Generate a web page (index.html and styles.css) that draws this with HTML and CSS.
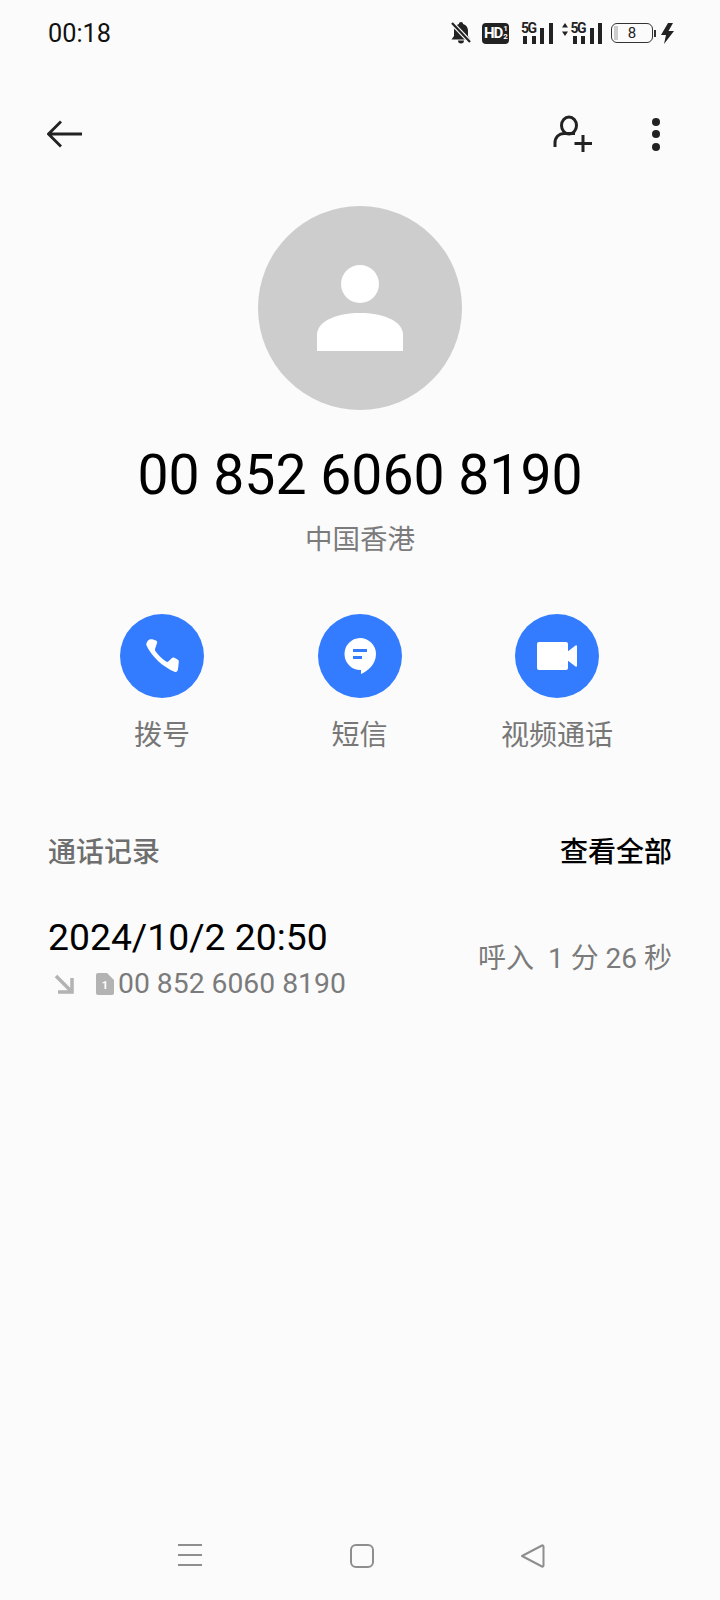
FILE: index.html
```html
<!DOCTYPE html>
<html>
<head>
	<meta charset="UTF-8">
	<title>通话详情</title>
	<link rel="stylesheet" href="styles.css">
</head>
<body>

	<div class="phone">

		<div class="status_bar">
			<span class="clock">00:18</span>
			<div class="status_icons">
				<svg class="ic_bell" width="22" height="24" viewBox="0 0 22 24">
					<path d="M11 1c1.200 0 2 .8 2.100 1.900 3.200.9 4.900 3.500 4.900 6.600v5.500l2.500 3.500H1.500L4 15V9.500c0-3.100 1.700-5.700 4.900-6.600C9 1.800 9.800 1 11 1z" fill="#222"/>
					<path d="M8 19.500h6a3 3 0 0 1-6 0z" fill="#222"/>
					<path d="M1 1l20 21" stroke="#fbfbfb" stroke-width="4.500"/>
					<path d="M2 2l18 19" stroke="#222" stroke-width="2.200"/>
				</svg>
				<div class="hd_badge">
					<span class="hd_text">HD</span>
					<span class="hd_num">1<br>2</span>
				</div>
				<div class="signal">
					<span class="net">5G</span>
					<span class="bars"><i class="b1"></i><i class="b2"></i><i class="b3"></i><i class="b4"></i></span>
				</div>
				<div class="signal">
					<svg class="ic_updown" width="6" height="13" viewBox="0 0 6 13">
						<path d="M3 0l3 4.500H0zM3 13L0 8.500h6z" fill="#222"/>
					</svg>
					<span class="net">5G</span>
					<span class="bars"><i class="b1"></i><i class="b2"></i><i class="b3"></i><i class="b4"></i></span>
				</div>
				<div class="battery">
					<div class="batt_body"><i class="batt_level"></i><span>8</span></div>
					<i class="batt_tip"></i>
				</div>
				<svg class="ic_bolt" width="13" height="21" viewBox="0 0 13 21">
					<path d="M7 0L0 12h5l-2 9 10-13H7.500L12 0z" fill="#222"/>
				</svg>
			</div>
		</div>

		<div class="top_bar">
			<svg width="36" height="28" viewBox="0 0 36 28">
				<path d="M35 14H2M14 1.500L1.500 14 14 26.500" fill="none" stroke="#222" stroke-width="2.800"/>
			</svg>
			<div class="top_right">
				<svg width="40" height="38" viewBox="0 0 40 38">
					<ellipse cx="16" cy="10.500" rx="7.500" ry="8.500" fill="none" stroke="#222" stroke-width="3"/>
					<path d="M2 32v-4c0-6 4-9.500 9-9.500h11" fill="none" stroke="#222" stroke-width="3"/>
					<path d="M30 20v17M21.500 28.500h17.500" fill="none" stroke="#222" stroke-width="3"/>
				</svg>
				<div class="dots"><i></i><i></i><i></i></div>
			</div>
		</div>

		<div class="contact">
			<div class="avatar">
				<svg width="86" height="86" viewBox="0 0 86 86">
					<circle cx="43" cy="19" r="19" fill="#fff"/>
					<path d="M0 86V70c0-15 22-22 43-22s43 7 43 22v16z" fill="#fff"/>
				</svg>
			</div>
			<div class="number">00 852 6060 8190</div>
			<div class="region">中国香港</div>
		</div>

		<div class="actions">
			<div class="action">
				<div class="circle">
					<svg width="34" height="34" viewBox="0 0 34 34">
						<path d="M4.500.5C5.500 0 7 0 8 .5l3 1c1 .5 1.500 1.500 1 2.500l-2 6c-.2.800 0 1.500.5 2.300 2.500 3.700 6.500 7.700 10.500 10.200 1 .5 1.700.5 2.300 0l3.700-3.500c.7-.7 1.700-.7 2.500-.3l3 1.800c1.200.7 1.500 1.500 1.300 2.500L33 30c-.2 2-1.500 3.300-3 3C18 28 7 18 1.500 6.500.8 4.500 2.500 1.500 4.500.5z" fill="#fff"/>
					</svg>
				</div>
				<span class="action_label">拨号</span>
			</div>
			<div class="action">
				<div class="circle">
					<svg width="32" height="36" viewBox="0 0 32 36">
						<path d="M16 0a16 16 0 0 1 16 16c0 10-8 17-15 20v-4A16 16 0 0 1 16 0z" fill="#fff"/>
						<path d="M9 11h14v3H9zM9 18h9v3H9z" fill="#347cff"/>
					</svg>
				</div>
				<span class="action_label">短信</span>
			</div>
			<div class="action">
				<div class="circle">
					<svg width="40" height="28" viewBox="0 0 40 28">
						<path d="M2 0h27a2 2 0 0 1 2 2v24a2 2 0 0 1-2 2H2a2 2 0 0 1-2-2V2a2 2 0 0 1 2-2z" fill="#fff"/>
						<path d="M30 10l8.500-6.500c.7-.5 1.500-.2 1.500.7v19.600c0 .9-.8 1.200-1.500.7L30 18z" fill="#fff"/>
					</svg>
				</div>
				<span class="action_label">视频通话</span>
			</div>
		</div>

		<div class="section_head">
			<span class="section_title">通话记录</span>
			<span class="section_more">查看全部</span>
		</div>

		<div class="record">
			<div class="record_left">
				<div class="record_date">2024/10/2 20:50</div>
				<div class="record_sub">
					<svg class="ic_in" width="20" height="20" viewBox="0 0 20 20">
						<path d="M2 2l14 14M18 4v14H4" fill="none" stroke="#b3b3b3" stroke-width="3.500"/>
					</svg>
					<svg class="ic_sim" width="18" height="22" viewBox="0 0 18 22">
						<path d="M2 0h9l7 7v13a2 2 0 0 1-2 2H2a2 2 0 0 1-2-2V2a2 2 0 0 1 2-2z" fill="#b3b3b3"/>
						<text x="9" y="16" class="sim_num">1</text>
					</svg>
					<span class="record_num">00 852 6060 8190</span>
				</div>
			</div>
			<div class="record_right">呼入&nbsp; 1 分 26 秒</div>
		</div>

		<div class="nav_bar">
			<svg width="26" height="24" viewBox="0 0 26 24">
				<path d="M1 2h24M1 12h24M1 22h24" stroke="#8e8e8e" stroke-width="2"/>
			</svg>
			<svg width="26" height="26" viewBox="0 0 26 26">
				<rect x="2" y="2" width="22" height="22" rx="5" fill="none" stroke="#8e8e8e" stroke-width="2"/>
			</svg>
			<svg width="26" height="26" viewBox="0 0 26 26">
				<path d="M2 13L22 2.500c.8-.4 1.500 0 1.500 1v19c0 1-.7 1.400-1.500 1z" fill="none" stroke="#8e8e8e" stroke-width="2" stroke-linejoin="round"/>
			</svg>
		</div>

	</div>

</body>
</html>
```

FILE: styles.css
```css
*{
	box-sizing: border-box;
}

body{
	margin: 0;
	background: #fbfbfb;
	font-family: Roboto, "Noto Sans CJK SC", sans-serif;
}

.phone{
	width: 720px;
	height: 1600px;
	display: flex;
	flex-direction: column;
	background: #fbfbfb;
}

/* status bar */
.status_bar{
	height: 66px;
	padding: 0 46px 0 48px;
	display: flex;
	align-items: center;
	justify-content: space-between;
}

.clock{
	font-size: 25.300px;
	color: #111;
}

.status_icons{
	display: flex;
	align-items: center;
}

.ic_bell{
	margin-right: 10px;
}

.hd_badge{
	width: 27px;
	height: 21px;
	margin-right: 12px;
	padding-left: 2px;
	border-radius: 4px;
	background: #222;
	color: #fff;
	display: flex;
	align-items: center;
	font-weight: 700;
}

.hd_text{
	font-size: 15px;
	letter-spacing: -1px;
}

.hd_num{
	font-size: 8px;
	line-height: 8px;
	margin-left: 1px;
}

.signal{
	display: flex;
	align-items: flex-end;
	height: 22px;
	margin-right: 9px;
}

.net{
	font-size: 14px;
	font-weight: 700;
	line-height: 12px;
	letter-spacing: -1.500px;
	color: #222;
	align-self: flex-start;
	width: 15px;
	margin-right: -13px;
}

.ic_updown{
	align-self: flex-start;
	margin-top: 1px;
	margin-right: 3px;
}

.bars{
	display: flex;
	align-items: flex-end;
	gap: 4.500px;
	height: 21px;
}

.bars i{
	display: block;
	width: 4px;
	background: #222;
}

.bars .b1{ height: 8px; }
.bars .b2{ height: 8px; }
.bars .b3{ height: 16px; }
.bars .b4{ height: 21px; }

.battery{
	display: flex;
	align-items: center;
	margin-right: 5px;
}

.batt_body{
	width: 42px;
	height: 20px;
	padding: 2px;
	border: 1.500px solid #333;
	border-radius: 6px;
	font-size: 15px;
	line-height: 15px;
	color: #222;
	text-align: center;
	position: relative;
}

.batt_level{
	position: absolute;
	left: 2px;
	top: 2px;
	bottom: 2px;
	width: 4px;
	background: #ccc;
}

.batt_tip{
	display: block;
	width: 2px;
	height: 7px;
	margin-left: 1px;
	background: #333;
}

/* top bar */
.top_bar{
	height: 72px;
	margin-top: 32px;
	padding: 0 60px 0 47px;
	display: flex;
	align-items: center;
	justify-content: space-between;
}

.top_right{
	display: flex;
	align-items: center;
	gap: 59px;
}

.dots{
	display: flex;
	flex-direction: column;
	gap: 4.500px;
}

.dots i{
	display: block;
	width: 8px;
	height: 8px;
	border-radius: 50%;
	background: #222;
}

/* contact */
.contact{
	display: flex;
	flex-direction: column;
	align-items: center;
	margin-top: 36px;
}

.avatar{
	width: 204px;
	height: 204px;
	border-radius: 50%;
	background: #cdcdcd;
	display: flex;
	align-items: center;
	justify-content: center;
}

.number{
	margin-top: 34px;
	font-size: 55.300px;
	line-height: 64px;
	color: #000;
}

.region{
	margin-top: 13px;
	font-size: 27.500px;
	line-height: 38px;
	color: #7b7b7b;
}

/* actions */
.actions{
	margin-top: 55px;
	padding: 0 121px 0 120px;
	display: flex;
	justify-content: space-between;
}

.action{
	width: 84px;
	display: flex;
	flex-direction: column;
	align-items: center;
}

.circle{
	width: 84px;
	height: 84px;
	border-radius: 50%;
	background: #347cff;
	display: flex;
	align-items: center;
	justify-content: center;
}

.action_label{
	margin-top: 19px;
	font-size: 28px;
	line-height: 38px;
	color: #777;
	white-space: nowrap;
}

/* records */
.section_head{
	margin-top: 79px;
	padding: 0 48px;
	display: flex;
	justify-content: space-between;
	font-size: 28px;
	line-height: 38px;
	font-weight: 500;
}

.section_title{
	color: #6e6e6e;
}

.section_more{
	color: #000;
}

.record{
	margin-top: 43px;
	padding: 0 48px;
	display: flex;
	align-items: center;
	justify-content: space-between;
}

.record_date{
	font-size: 37.300px;
	line-height: 44px;
	color: #000;
}

.record_sub{
	margin-top: 6px;
	display: flex;
	align-items: center;
}

.ic_in{
	margin-left: 6px;
}

.ic_sim{
	margin-left: 22px;
	margin-right: 4px;
}

.sim_num{
	font-size: 11px;
	font-weight: 700;
	fill: #fff;
	text-anchor: middle;
}

.record_num{
	font-size: 28.300px;
	line-height: 38px;
	color: #7b7b7b;
}

.record_right{
	font-size: 28px;
	line-height: 38px;
	color: #7b7b7b;
}

/* nav bar */
.nav_bar{
	margin-top: auto;
	height: 57px;
	padding: 0 174px 0 177px;
	display: flex;
	align-items: flex-start;
	justify-content: space-between;
}
```
